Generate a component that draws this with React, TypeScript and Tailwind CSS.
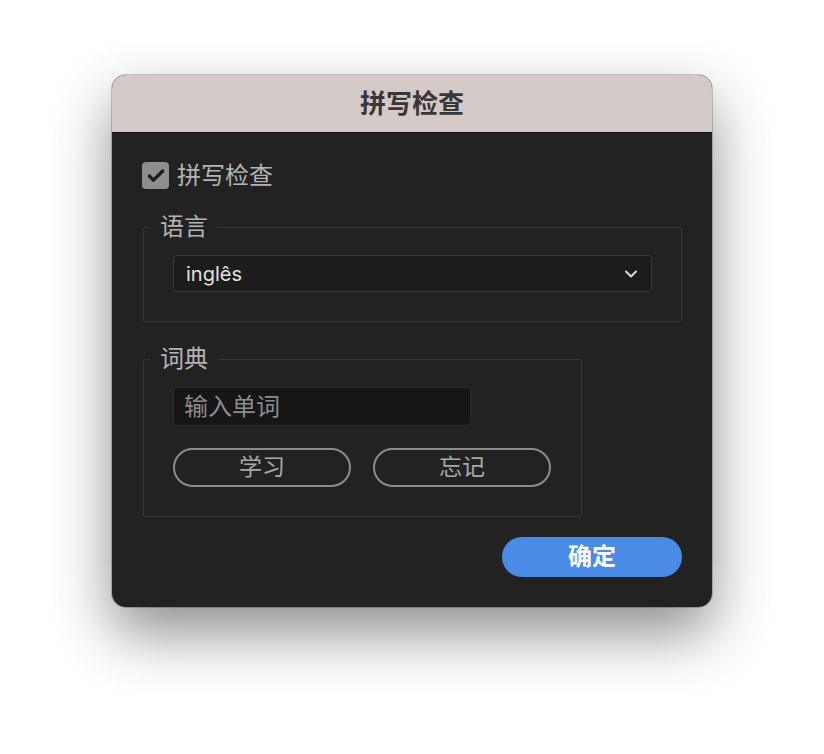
import { Check, ChevronDown } from "lucide-react";

const font = { fontFamily: 'Inter, "Noto Sans CJK SC", sans-serif' };

function Group({ label, className, children }: { label: string; className?: string; children: React.ReactNode }) {
  return (
    <fieldset className={`rounded-[2px] border border-[#363636] px-[29px] pb-[29px] ${className ?? ""}`}>
      <legend className="ml-[-23px] px-[10px] text-[24px] leading-[24px] text-[#b4b4b4]">{label}</legend>
      {children}
    </fieldset>
  );
}

export default function App() {
  return (
    <div className="min-h-screen bg-white pt-[75px]" style={font}>
      <div className="mx-auto w-[600px] overflow-hidden rounded-[14px] bg-[#222222] shadow-[0_26px_60px_rgba(0,0,0,0.45)] ring-1 ring-black/20">
        <div className="flex h-[58px] items-center justify-center border-b border-[#111111] bg-[#d3cac8]">
          <h1 className="text-[26px] font-bold text-[#3b3737]">拼写检查</h1>
        </div>

        <div className="flex flex-col px-[30px] pb-[30px] pt-[29px]">
          <label className="flex items-center gap-[8px]">
            <span className="flex size-[27px] items-center justify-center rounded-[4px] bg-[#8e8e8e]">
              <Check className="size-[20px] text-[#1c1c1c]" strokeWidth={4} />
            </span>
            <span className="text-[24px] leading-[27px] text-[#b4b4b4]">拼写检查</span>
          </label>

          <Group label="语言" className="mt-[26px] ml-px w-[539px]">
            <div className="mt-[16px] flex h-[37px] items-center justify-between rounded-[4px] border border-[#3a3a3a] bg-[#1c1c1c] pl-[12px] pr-[10px]">
              <span className="text-[20px] text-[#e2e2e2]">inglês</span>
              <ChevronDown className="size-[20px] text-[#d8d8d8]" strokeWidth={2.5} />
            </div>
          </Group>

          <Group label="词典" className="mt-[25px] ml-px w-[439px]">
            <input
              placeholder="输入单词"
              className="mt-[16px] block h-[39px] w-[298px] rounded-[4px] border border-[#2e2e2e] bg-[#161616] px-[10px] text-[24px] text-[#e2e2e2] outline-none placeholder:text-[#8c8c8c]"
            />
            <div className="mt-[22px] flex gap-[22px]">
              <button className="h-[39px] w-[178px] rounded-full border-2 border-[#8c8c8c] text-[23px] text-[#a8a8a8]">学习</button>
              <button className="h-[39px] w-[178px] rounded-full border-2 border-[#8c8c8c] text-[23px] text-[#a8a8a8]">忘记</button>
            </div>
          </Group>

          <div className="mt-[20px] flex justify-end">
            <button className="h-[40px] w-[180px] rounded-full bg-[#4a8be5] text-[24px] font-bold text-white">确定</button>
          </div>
        </div>
      </div>
    </div>
  );
}
